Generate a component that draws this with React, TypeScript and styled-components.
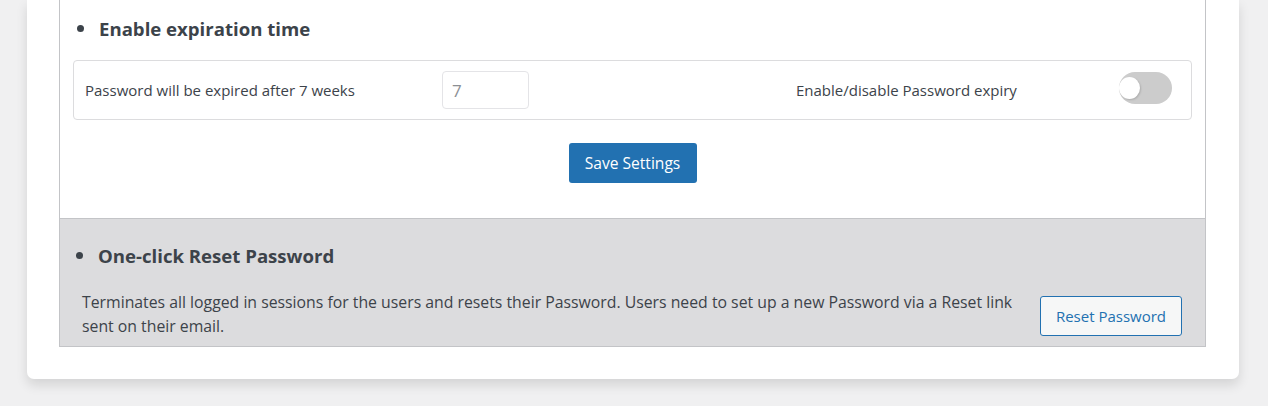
import styled, { createGlobalStyle } from "styled-components";

const GlobalStyle = createGlobalStyle`
    body {
        margin: 0;
        background: #f0f0f1;
        font-family: "Open Sans", "Noto Sans", sans-serif;
        color: #3c434a;
    }
`

const Page = styled.div`
    padding: 0 29px 27px 27px;
`

const Card = styled.div`
    background: #fff;
    border-radius: 0 0 7px 7px;
    box-shadow: 0 6px 12px rgba(0, 0, 0, 0.12);
    padding: 0 33px 32px 32px;
`

const Panel = styled.div`
    border-left: 1px solid #c3c4c7;
    border-right: 1px solid #c3c4c7;
    border-bottom: 1px solid #c3c4c7;
`

const Section = styled.div`
    padding: 15px 13px 35px 13px;
`

const Heading = styled.h3<{ $indent: number }>`
    margin: 0;
    display: flex;
    align-items: center;
    gap: 15px;
    font-size: 18.6px;
    font-weight: 700;
    color: #3c434a;
    height: 26px;
    padding-left: ${props => props.$indent}px;
    &::before {
        content: "";
        width: 7px;
        height: 7px;
        border-radius: 50%;
        background: #3c434a;
    }
`

const Row = styled.div`
    margin-top: 19px;
    border: 1px solid #dcdcde;
    border-radius: 4px;
    height: 58px;
    display: flex;
    align-items: center;
    padding: 0 19px 0 11px;
`

const Label = styled.span<{ $w: number }>`
    font-size: 15px;
    width: ${props => props.$w}px;
`

const NumberInput = styled.input`
    width: 87px;
    height: 38px;
    box-sizing: border-box;
    border: 1px solid #e4e4e7;
    border-radius: 4px;
    padding: 0 9px;
    font-family: inherit;
    font-size: 17px;
    color: #8c8f94;
    background: #fff;
    margin-left: -1px;
`

const Spacer = styled.div`
    flex: 1;
`

const Toggle = styled.div`
    width: 53px;
    height: 32px;
    border-radius: 16px;
    background: #cccccc;
    position: relative;
    margin-bottom: 5px;
    &::after {
        content: "";
        position: absolute;
        left: 0;
        top: 5px;
        width: 21px;
        height: 22px;
        border-radius: 50%;
        background: #fff;
        box-shadow: 1px 1px 2px rgba(0, 0, 0, 0.15);
    }
`

const Actions = styled.div`
    display: flex;
    justify-content: center;
    margin-top: 23px;
`

const PrimaryButton = styled.button`
    width: 128px;
    height: 40px;
    border: none;
    border-radius: 3px;
    background: #2271b1;
    color: #fff;
    font-family: inherit;
    font-size: 15.6px;
`

const GreySection = styled.div`
    background: #dcdcde;
    border-top: 1px solid #c3c4c7;
    padding: 23px 23px 8px 16px;
`

const ResetRow = styled.div`
    display: flex;
    align-items: center;
    margin-top: 22px;
    padding-left: 6px;
`

const Description = styled.p`
    margin: 0;
    width: 950px;
    font-size: 15.8px;
    line-height: 24px;
`

const SecondaryButton = styled.button`
    margin-left: auto;
    margin-top: 4px;
    width: 142px;
    height: 40px;
    border: 1px solid #2271b1;
    border-radius: 3px;
    background: #f6f7f7;
    color: #2271b1;
    font-family: inherit;
    font-size: 15px;
`

export default function App() {
    return (
        <>
            <GlobalStyle />
            <Page>
                <Card>
                    <Panel>
                        <Section>
                            <Heading $indent={4}>Enable expiration time</Heading>
                            <Row>
                                <Label $w={358}>Password will be expired after 7 weeks</Label>
                                <NumberInput type="number" defaultValue={7} />
                                <Spacer />
                                <Label $w={323}>Enable/disable Password expiry</Label>
                                <Toggle />
                            </Row>
                            <Actions>
                                <PrimaryButton>Save Settings</PrimaryButton>
                            </Actions>
                        </Section>
                        <GreySection>
                            <Heading $indent={0}>One-click Reset Password</Heading>
                            <ResetRow>
                                <Description>
                                    Terminates all logged in sessions for the users and resets their Password. Users need to set up a new Password via a Reset link sent on their email.
                                </Description>
                                <SecondaryButton>Reset Password</SecondaryButton>
                            </ResetRow>
                        </GreySection>
                    </Panel>
                </Card>
            </Page>
        </>
    )
}
